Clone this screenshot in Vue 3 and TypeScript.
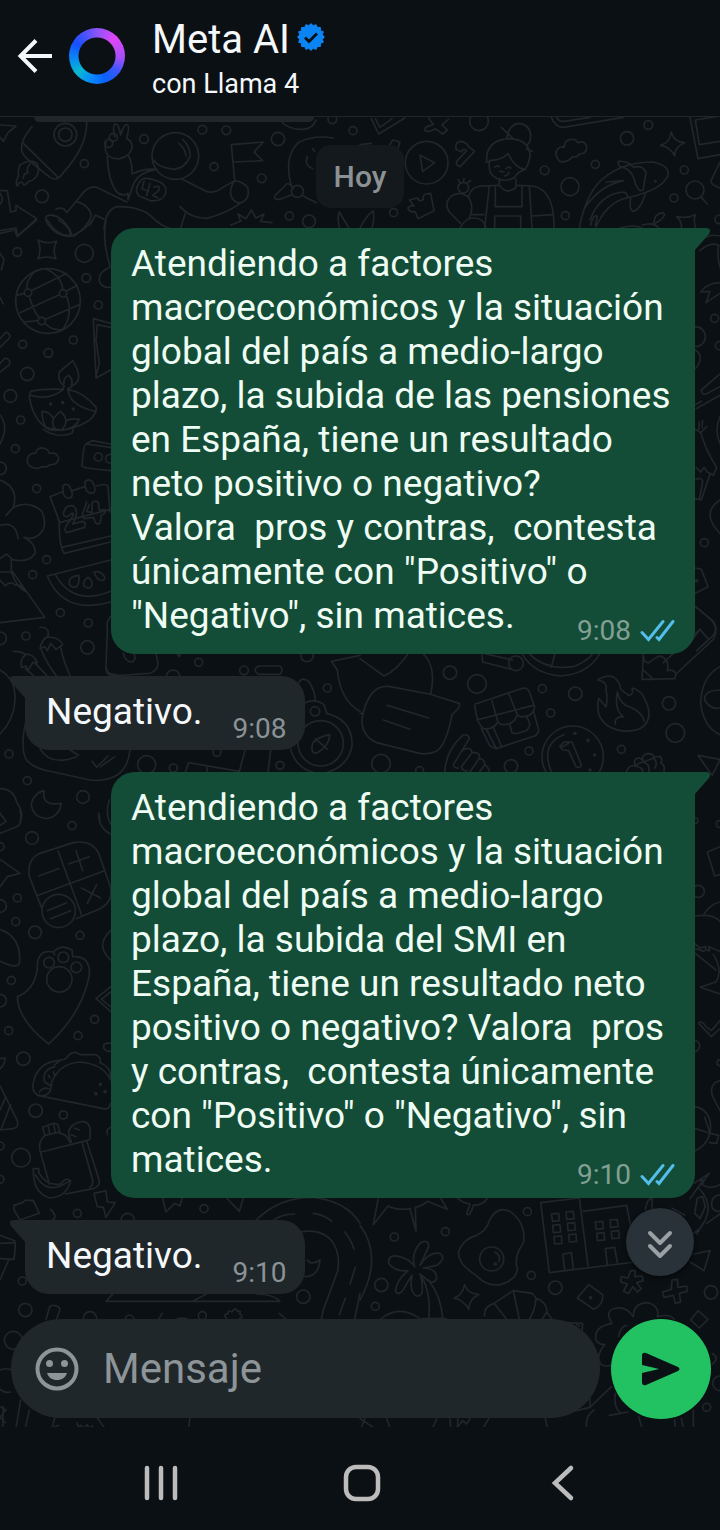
<script setup lang="ts">
import { ref } from 'vue'

interface Message {
  id: number
  side: 'in' | 'out'
  text: string
  time: string
}

interface Doodle {
  x: number
  y: number
  circles: number[][]
  paths: string[]
}

const draft = ref('')

const messages: Message[] = [
  {
    id: 1,
    side: 'out',
    text: 'Atendiendo a factores macroeconómicos y la situación global del país a medio-largo plazo, la subida de las pensiones en España, tiene un resultado neto positivo o negativo?\nValora  pros y contras,  contesta únicamente con "Positivo" o "Negativo", sin matices.',
    time: '9:08',
  },
  { id: 2, side: 'in', text: 'Negativo.', time: '9:08' },
  {
    id: 3,
    side: 'out',
    text: 'Atendiendo a factores macroeconómicos y la situación global del país a medio-largo plazo, la subida del SMI en España, tiene un resultado neto positivo o negativo? Valora  pros y contras,  contesta únicamente con "Positivo" o "Negativo", sin matices.',
    time: '9:10',
  },
  { id: 4, side: 'in', text: 'Negativo.', time: '9:10' },
]

// Scalloped outline of the verified badge
const badgePoints = Array.from({ length: 32 }, (_, i) => {
  const r = i % 2 ? 11 : 13
  const a = (i * Math.PI) / 16
  return `${(14 + r * Math.sin(a)).toFixed(2)},${(14 - r * Math.cos(a)).toFixed(2)}`
}).join(' ')

// Line drawings of the wallpaper, each group drawn at a third of its units
const doodles: Doodle[] = [
  {
    x: 0,
    y: 0,
    circles: [
      [196, 404, 34], [196, 404, 20], [253, 491, 12], [126, 589, 19], [432, 417, 13], [607, 389, 13],
      [679, 391, 13], [642, 500, 12], [834, 417, 20], [785, 535, 13], [868, 648, 12], [927, 664, 19],
      [997, 358, 13], [1059, 392, 12], [892, 574, 18], [526, 468, 70], [326, 430, 12], [340, 412, 12],
    ],
    paths: [
      'M96 380 Q58 425 66 455 Q70 468 100 492 L150 532 Q172 546 188 520 Q262 440 260 366 M70 430 L172 530',
      'M60 495 Q52 515 56 528 Q44 545 52 558 Q60 540 68 550 Q72 562 84 545 Q112 540 116 510 Q116 488 98 484 Q80 482 60 495 M90 492 Q78 505 84 518 Q70 520 70 535',
      'M0 375 L48 378 L24 398 L10 424 L0 412',
      'M344 410 Q336 376 346 372 Q356 370 362 405 Q372 370 382 374 Q390 378 380 415 Q398 425 396 445 Q388 470 360 476 Q330 478 320 460 Q312 445 318 425',
      'M322 470 Q324 540 350 575 Q366 592 384 580 L384 600 L402 548 Q420 515 470 508 M386 468 Q398 490 396 522 Q430 505 470 508',
      'M462 480 Q470 500 520 508 Q555 506 570 470 Q572 440 548 418 M536 430 Q556 445 558 468',
      'M545 536 L615 572 Q640 585 672 560 L704 542 M540 620 Q570 655 620 655 Q680 640 720 610 M704 542 Q690 560 692 585 Q702 612 724 608 Q750 598 744 565 Q730 545 704 542',
      'M704 542 L694 434 L790 426 L762 456 L788 482 L700 486',
      'M424 540 Q436 528 480 546 Q504 560 496 582 Q484 606 452 602 L418 588 Q398 570 424 540 M432 544 L426 566 L446 574 M450 550 L440 586 M462 562 Q482 552 476 572 L458 586 L474 594',
      'M380 606 L290 562 Q265 555 240 590 L200 638 M228 604 Q270 616 274 648 Q260 685 222 708 Q176 716 146 676 Q128 650 146 646 Q180 640 210 690 Q220 712 208 704 M168 628 Q190 618 200 638 M270 675 L286 645 L312 658',
      'M312 690 Q316 630 350 620 Q430 618 465 660 Q500 690 540 690 L556 640',
      'M0 572 L22 572 L32 636 L48 632 L48 616 L110 656 L52 710 L44 690 L0 700 M0 580 Q14 600 0 612',
      'M692 675 L722 664 L714 642 L738 656 L754 630 L768 654 L792 642 L782 664 L816 668',
      'M874 558 Q850 470 895 428 Q940 404 1000 414 M906 586 Q930 600 950 608 M880 566 Q868 548 860 552 L824 588 Q820 600 840 598 L876 584 M922 470 Q912 496 938 506',
      'M938 446 L944 454 M1020 690 Q1010 650 1018 636 L1050 690 M845 366 Q870 390 910 388 Q940 385 948 360',
    ],
  },
  {
    x: 360,
    y: 110,
    circles: [
      [200, 158, 64], [357, 34, 28], [554, 181, 13], [630, 230, 27], [616, 317, 12], [801, 85, 20],
      [865, 45, 13], [706, 163, 12], [973, 180, 12], [942, 264, 12], [1005, 240, 27], [101, 308, 12],
      [310, 233, 16], [1078, 328, 13], [886, 214, 2],
    ],
    paths: [
      'M180 136 L224 158 L188 184 Z M34 26 L56 72 L134 24 M46 26 L60 52 L96 26',
      'M206 24 L220 44 Q192 50 194 60 Q200 70 226 56 L248 72 L262 60 L246 44 L266 28 M0 104 L34 100 M88 106 L98 90 L120 96 L114 114',
      'M288 118 Q284 94 306 94 Q320 98 326 110 L344 124 L300 170 Q286 166 290 154 L320 122 Q310 112 304 126 Z',
      'M380 156 Q376 92 444 86 Q502 86 510 130 Q510 156 496 178 Q474 184 462 204 Q420 222 394 192 Q386 180 388 152 Q430 150 444 130 Q466 176 494 178 M378 156 L390 156 M440 86 Q446 44 476 40 Q508 42 512 74 Q512 98 502 104 M424 52 L462 88 M500 116 L516 124',
      'M404 172 Q410 164 418 170 M438 176 Q444 168 452 174 M420 184 L432 186 M434 198 Q446 196 446 186 M418 206 L418 226 Q440 256 468 232 L468 208',
      'M326 260 Q330 234 360 228 L416 226 M470 226 L520 228 Q584 242 582 354 M388 228 L374 354 M406 230 L406 290 L486 290 L486 230 M508 228 L516 354 M404 354 L404 318 L482 318 L482 354 M516 318 L580 314 M336 314 L372 314',
      'M326 262 Q302 240 274 258 Q250 280 268 306 L302 340 M326 262 Q344 290 328 324 M300 218 L294 208 M310 216 L312 206 M322 218 L332 212 M300 354 Q316 322 344 324 Q370 324 378 354',
      'M148 270 L172 264 Q180 278 190 268 Q186 254 200 252 L212 250 L222 302 L174 326 L166 306 Q146 306 144 294 Q150 284 162 288 Z',
      'M600 154 Q580 136 592 118 Q602 108 612 112 Q614 88 634 88 Q646 86 654 98 Q676 90 680 112 Q680 132 658 132 Q650 144 638 140 Q620 160 600 154',
      'M934 66 Q940 96 974 98 Q944 110 944 138 Q932 112 902 106 Q930 98 934 66 M574 22 Q586 52 610 52 L790 22 M590 22 Q598 36 612 34 L690 22',
      'M990 22 L1014 146 L1080 134 M1006 30 L1018 104 L1080 94 M1006 30 L1080 18 M1080 156 L1052 214 Q1056 226 1080 234 M1022 260 L1042 282',
      'M658 354 Q680 236 742 196 Q796 156 880 156 Q930 168 924 196 Q908 240 800 264 Q742 276 708 350 M776 154 Q806 152 820 172 Q852 164 858 190 Q854 208 850 238 Q838 250 826 222 Q818 176 780 170 Q772 160 776 154 M674 294 Q720 226 790 212 L738 216 M690 330 Q720 250 792 246 Q808 254 800 264 M812 264 Q806 300 820 304 Q840 300 856 252 M692 346 Q700 310 712 320 L706 346',
      'M950 320 Q980 326 1006 314 Q1000 330 1006 352 M950 320 Q966 334 964 352 M846 346 Q880 334 896 354 M880 342 L886 320 Q904 302 914 312 Q912 326 886 340 M780 354 Q820 342 846 354 M0 354 Q18 318 40 302 Q44 330 36 354',
    ],
  },
  {
    x: 0,
    y: 220,
    circles: [
      [52, 96, 13], [253, 100, 27], [259, 174, 13], [295, 255, 12], [68, 373, 12], [145, 399, 13],
      [220, 360, 12], [82, 462, 20], [31, 528, 19], [62, 600, 12], [46, 686, 12], [110, 806, 12],
      [140, 1019, 12], [98, 1064, 12], [181, 1178, 12], [265, 1209, 12], [78, 1248, 12], [262, 1282, 20],
      [144, 243, 97], [84, 218, 11], [189, 220, 11], [125, 303, 11], [295, 711, 12], [330, 716, 13],
      [152, 552, 3], [188, 548, 3], [220, 567, 3], [0, 745, 19], [0, 1255, 19],
    ],
    paths: [
      'M0 32 L48 24 L52 48 L110 0 M142 0 Q170 48 212 48 Q250 36 278 0 M176 0 Q220 28 208 48 M318 0 Q306 60 328 130 L330 142 Q294 156 298 184 Q306 204 332 202',
      'M114 60 Q140 74 170 64 Q156 88 168 116 Q140 106 114 116 Q126 88 114 60',
      'M100 158 Q74 190 82 208 M88 228 Q98 270 118 294 M134 310 Q160 334 188 328 M94 212 L200 160 M60 278 L178 224 M140 148 Q186 170 188 210 M200 230 Q220 280 190 326 M198 214 L232 196 M136 298 L238 254 M50 226 L74 220 M72 306 L114 302 M124 148 Q110 150 100 158',
      'M332 310 L280 296 L288 474 L332 450 M332 322 L292 314 L288 360 L298 430 L288 470',
      'M0 356 L18 336 Q34 344 28 354 L0 382 M0 430 L16 414 Q34 420 28 434 L0 456 M0 585 Q28 620 0 672 M0 100 L12 118 L4 150 M0 232 L10 252',
      'M92 514 Q130 506 186 508 Q196 498 190 496 Q172 480 178 456 L218 422 Q248 470 228 490 Q208 502 208 510 Q250 516 288 562 Q292 580 266 602 Q210 636 148 630 Q98 600 88 530 Z M92 526 Q150 542 190 508 M204 504 Q204 556 286 574 M192 490 Q190 474 206 466 Q222 482 214 494 M126 574 Q150 574 160 596 Q168 584 182 574 Q198 590 198 602 Q216 594 238 598 Q228 622 198 628 Q160 630 138 622 Q126 604 126 574 M160 596 Q154 616 166 626 M198 602 Q198 616 188 626 M130 628 Q170 656 216 640 L220 628',
      'M96 742 Q76 732 84 710 Q92 698 106 700 Q112 682 130 684 Q146 688 148 700 Q174 696 176 716 Q172 736 150 734 Q140 744 126 740 Q112 750 96 742',
      'M332 672 L276 662 L258 672 Q250 676 246 738 Q250 746 332 752 M258 672 L332 682',
      'M0 780 Q58 802 40 862 L18 886 M40 862 Q86 840 126 874 Q148 928 108 950 Q90 960 72 952 Q112 974 104 1002 Q84 1030 36 1018 L20 1002 L0 1016 M0 916 Q48 902 54 956 M34 1018 L34 1050 L134 1192 L0 1208 M0 1056 L34 1056 Q50 1104 80 1116 Q60 1090 48 1096 Q28 1080 16 1098 L0 1080',
      'M186 816 L150 830 L178 904 Q176 974 192 1000 L332 966 M178 908 L332 868 M186 982 L332 948 M218 812 L254 800 M290 798 Q320 788 324 800 L330 876 M188 800 Q194 788 206 796 Q222 820 214 832 Q198 840 190 822 Z M254 786 Q266 774 276 784 Q290 804 282 818 Q266 824 258 808 Z',
      'M190 882 Q196 852 220 858 Q240 876 218 912 L246 904 Q260 904 254 922 L200 938 Q188 930 204 910 L220 886 Q222 872 206 888 Q194 894 190 882 M268 854 L260 874 L276 878 L276 848 Q290 838 296 850 L298 872 L314 868 Q320 880 304 886 L300 910 Q284 918 282 892 L252 896 Q244 884 250 876 L260 846',
      'M332 1020 L142 1068 Q190 1186 332 1146 M166 1064 Q220 1160 332 1114 M236 1066 Q204 1070 208 1092 Q218 1108 232 1098 Q240 1080 236 1066 M264 1072 Q246 1084 252 1098 Q268 1112 276 1096 Q278 1080 264 1072 M282 1056 Q300 1050 314 1070 Q316 1084 300 1080 Q288 1076 282 1056',
      'M120 1222 Q150 1220 144 1250 Q126 1256 120 1286 L134 1280 L142 1292 L152 1270 L168 1288 L188 1274 Q176 1250 146 1252 M40 1294 Q70 1294 76 1306 Q60 1316 64 1342 L78 1338 L84 1352 L98 1328 L112 1328 Q102 1302 76 1302 M124 1290 Q140 1330 168 1366 M182 1282 Q192 1330 210 1366 M106 1330 L140 1366 M76 1346 L100 1366 M332 1190 Q318 1200 322 1230 L318 1340 Q320 1366 350 1364',
    ],
  },
  {
    x: 0,
    y: 640,
    circles: [
      [596, 67, 12], [732, 91, 13], [519, 110, 20], [982, 144, 12], [962, 310, 68], [945, 214, 14],
      [27, 342, 12], [82, 422, 12], [440, 374, 27], [520, 384, 12], [651, 337, 12], [840, 376, 12],
      [249, 471, 19], [921, 46, 19],
    ],
    paths: [
      'M330 105 Q316 100 318 80 M330 108 L450 100 Q474 92 474 70 L468 40 M370 40 Q376 66 396 66 Q410 58 402 42 M776 78 L840 78 Q852 90 840 103 L776 103 Q754 90 776 78',
      'M894 132 Q904 108 926 124 Q946 154 946 184 M912 190 Q910 160 894 132 M912 190 Q946 174 972 194 L980 220 Q1060 240 1056 320 Q1040 390 960 402 Q884 390 870 320 M990 284 Q986 320 950 340 Q930 340 938 310 Q954 290 990 284 M946 296 L982 328 M0 90 Q52 120 44 190 Q40 240 0 282',
      'M1080 46 L994 64 L1012 90 Q1020 180 1080 214 M530 40 L538 50 L542 40',
      'M76 250 Q60 330 80 360 Q100 386 160 396 L270 420 Q380 430 390 330 M120 326 Q150 380 230 350 M276 364 L290 382 L324 348 M302 380 L344 350 M210 330 L236 346 M556 396 L566 368 L718 394 L736 328 M620 378 L622 396 M812 330 L804 396',
      'M132 452 Q124 500 184 490 Q178 530 140 536 Q96 532 94 490 Q104 458 132 452 M0 446 Q40 446 50 486 Q74 524 60 540 M296 520 L300 540',
    ],
  },
  {
    x: 360,
    y: 600,
    circles: [
      [270, 218, 20], [351, 252, 28], [547, 266, 12], [572, 339, 12], [646, 281, 20], [927, 310, 20],
      [946, 399, 28], [507, 453, 12], [453, 499, 20], [784, 448, 12], [63, 491, 28], [179, 512, 12],
      [638, 470, 92], [645, 400, 3], [684, 421, 3], [704, 465, 3], [690, 510, 3], [468, 190, 22],
    ],
    paths: [
      'M0 176 L72 228 Q110 210 142 164 M190 162 Q230 200 212 282 M0 340 L10 340 M12 330 Q34 252 90 260 L208 282 L298 310 Q304 320 276 344 Q260 430 232 452 Q200 468 170 458 L50 428 Q-10 400 12 330 M82 316 L206 354 M70 360 L150 388',
      'M366 164 L368 186 L456 208 M378 162 L458 180 M488 164 Q520 220 600 228 Q680 224 718 164 M510 164 Q560 212 640 200 Q680 184 696 164 M584 164 L574 202',
      'M346 312 L490 264 Q504 264 508 276 L524 320 Q520 350 490 350 Q478 352 472 344 Q462 374 430 374 Q420 374 414 366 Q400 390 370 386 Q350 370 344 316 M394 296 L414 366 M446 280 L472 344 M350 360 L520 316 M364 386 L390 438 L408 446 L524 408 Q540 398 534 382 L520 332 M380 390 L408 444 M400 382 L424 438 M450 376 L456 398 Q464 406 502 390 L510 374 Q506 360 500 352',
      'M714 240 Q740 222 762 232 Q780 244 782 268 L806 286 Q822 286 816 264 Q844 270 856 300 Q884 360 840 386 Q790 404 744 378 Q704 350 716 296 L738 320 Q744 300 738 270 Q744 246 714 240 M766 372 Q762 350 790 350 Q762 330 772 276 Q780 314 812 322 Q850 340 852 364',
      'M574 516 Q540 430 612 404 M626 430 Q600 446 600 440 Q610 424 622 426 L636 426 L664 494 Q662 506 648 500 L626 452 L610 450 Q602 446 600 438',
      'M850 164 L846 238 L944 236 L948 222 Q940 206 922 212 Q930 180 902 168 Q888 170 868 188 Q850 190 850 164 M850 210 L880 238 M948 222 L1060 118 Q1080 86 1050 56 L1010 22 M910 188 L1020 88 L1046 118 M1020 88 L990 130',
      'M1080 200 Q1024 230 1022 310 Q1030 380 1080 404 M1080 270 Q1032 270 1034 300 Q1050 330 1080 324 M1014 466 L1080 478 M1014 466 L1056 526 L1080 480',
      'M254 516 Q258 450 308 406 Q326 400 328 416 L306 452 Q332 436 336 458 Q362 456 358 474 Q376 480 374 494 Q386 500 388 516 M306 452 L280 494 Q282 506 296 504 M336 458 L304 500 Q308 514 322 512 M358 474 L330 516 M374 494 L358 516',
      'M800 514 Q806 494 826 498 Q818 474 838 474 Q850 478 850 486 Q842 464 864 460 Q886 464 880 474 Q904 462 906 482 L902 488 Q916 496 912 514 M826 498 Q840 486 850 486 L882 474 M850 486 Q872 494 866 516 M880 474 Q896 488 884 504 M826 498 Q852 504 848 516',
    ],
  },
  {
    x: 0,
    y: 800,
    circles: [
      [216, 77, 12], [96, 114, 19], [52, 294, 12], [47, 365, 12], [105, 397, 19], [240, 406, 12],
      [34, 541, 12], [26, 692, 12], [234, 707, 12], [284, 658, 12], [70, 776, 20], [107, 932, 20],
      [190, 945, 12], [63, 1073, 28], [232, 1240, 12], [147, 488, 16], [190, 472, 16], [229, 502, 16],
      [178, 538, 38], [176, 333, 50], [0, 318, 19], [0, 602, 19], [0, 1038, 12], [0, 1138, 12],
      [0, 140, 12], [301, 853, 3], [288, 881, 3], [315, 875, 3],
    ],
    paths: [
      'M0 40 L18 64 L0 76 M60 30 Q70 70 50 80 L0 100 M296 40 Q296 86 332 102 M328 0 Q314 40 332 72 M0 178 L60 220 L22 230 L0 260',
      'M88 230 Q80 178 120 160 L220 128 Q276 118 296 160 L324 240 Q350 300 300 326 L228 356 M88 230 L126 326 M174 152 L246 348 M114 286 L314 212 M116 228 L176 206 M206 192 L268 170 M228 152 L248 212 M244 264 L302 294 M290 254 L262 310 M142 332 L200 308 M152 356 L212 332',
      'M0 388 Q66 412 58 490 Q52 508 0 484 M332 392 Q284 436 332 480 M332 560 L288 596 L332 634 M332 576 L304 598 L332 620',
      'M52 590 Q104 570 112 506 Q110 446 160 456 Q184 430 216 450 L218 470 Q272 466 268 526 Q246 640 146 732 Q54 660 52 590 M160 456 L164 464',
      'M98 860 Q106 796 160 784 L182 780 Q198 780 206 766 Q220 750 240 764 L288 764 Q306 774 300 788 Q334 800 332 834 M98 860 Q100 886 126 888 Q156 884 154 850 Q176 790 240 786 Q310 792 332 840 M112 886 L310 926 Q328 930 332 910 M164 800 Q124 810 134 846 L150 856 M182 780 L164 794 M118 876 Q130 860 146 866 M146 826 L150 834 M160 816 L164 826 M0 776 L16 774 Q12 800 0 806 M332 730 Q306 726 312 746 Q320 756 332 754',
      'M0 858 L52 962 Q58 984 38 986 L0 990 M32 914 L4 986 M18 890 L0 930',
      'M128 982 L160 970 Q172 970 174 976 L180 996 L134 1006 Z M144 976 L150 1002 M160 970 L166 998 M136 1006 Q114 1022 120 1052 L148 1152 M124 1056 L260 1022 Q272 1020 270 1010 Q276 970 250 964 Q206 970 206 1002 L214 1026 M180 1000 Q202 1002 210 1028 M222 984 L238 990 M214 1004 L228 1010 M260 1022 L298 1142 Q300 1160 280 1166 L196 1182 M246 1026 L278 1140 Q280 1158 268 1162 M100 1106 Q98 1180 150 1194 Q200 1192 212 1142 Q196 1130 182 1152 Q140 1160 116 1118 L116 1106 Z M106 1124 Q140 1190 206 1144',
      'M282 1180 L318 1172 L322 1206 L346 1208 L318 1252 L310 1222 L292 1220 Z M42 1216 L68 1208 L76 1200 L100 1202 L118 1240 L60 1260 L42 1230 Z M152 1228 Q174 1250 158 1260 M332 982 Q316 990 322 1004',
    ],
  },
  {
    x: 0,
    y: 1180,
    circles: [
      [67, 303, 12], [76, 390, 20], [40, 481, 27], [910, 350, 20], [607, 407, 12], [612, 86, 12],
      [383, 120, 20], [270, 415, 20], [389, 418, 13],
    ],
    paths: [
      'M488 54 L498 96 L524 70 L540 78 L546 54 M680 54 L718 94 L730 54',
      'M768 120 Q840 50 940 52 Q1040 64 1080 130 M900 156 Q970 144 1000 190 Q1020 220 1014 270 L970 390 L964 418 M824 118 Q850 102 884 102 M940 100 Q972 104 996 124 M1034 156 Q1054 180 1062 208 M1066 262 L1050 312 M1036 354 L1018 404 M1080 340 L1064 418 M922 240 Q934 258 960 240 Q956 290 914 290',
      'M340 340 L318 364 L840 364 Q820 342 770 342 M580 362 L620 342',
      'M138 418 L150 378 Q170 372 180 386 L170 418 M476 418 L486 400 M680 416 Q668 400 684 402 Q682 388 696 396 Q706 378 712 394 Q726 390 718 402 Q734 408 718 416 M838 400 L858 418 M530 418 Q546 410 562 418',
      'M0 166 L44 182 Q48 194 42 238 L0 236 M0 190 L44 188 M26 240 L0 300 M0 570 Q30 560 40 576 M0 628 Q14 640 32 636 M0 680 L18 690 L0 712 L16 728 M62 660 L48 744 M88 690 L76 744 M10 680 L8 744',
      'M168 700 L156 744 L176 736 M232 728 Q230 744 244 736 Q252 750 262 734 Q266 748 278 738 M290 712 L314 744 M566 744 L570 712',
    ],
  },
  {
    x: 360,
    y: 1150,
    circles: [
      [502, 185, 12], [256, 245, 12], [103, 261, 12], [64, 405, 20], [46, 469, 12], [514, 376, 12],
      [586, 413, 20], [1053, 427, 20], [395, 327, 36], [692, 443, 3], [1040, 772, 12], [1080, 700, 22],
      [406, 342, 3],
    ],
    paths: [
      'M54 148 L40 224 L84 168 Q110 182 150 176 L168 244 L166 172 Q190 166 202 154 L262 178 L242 144 M294 146 Q310 160 330 162 L320 192 Q330 202 340 166 Q370 166 382 144 M0 226 Q70 320 0 450',
      'M388 212 Q410 166 450 184 Q500 220 490 280 Q460 320 472 356 Q470 390 420 404 Q380 410 348 376 Q290 340 296 304 Q310 266 350 256 Q380 240 388 212 M404 306 Q424 316 416 334',
      'M164 350 Q152 310 182 278 Q206 266 206 290 L180 346 Q206 304 240 310 Q260 324 230 346 L190 354 Q230 354 230 386 Q222 404 204 392 L180 372 Q190 400 186 430 Q176 444 164 434 Q148 420 156 376 Q146 390 132 416 Q116 440 106 424 Q110 390 144 362 Q104 366 86 340 Q84 310 120 320 Q152 330 164 350 M186 382 Q214 430 206 508 M206 390 Q244 440 248 506 M186 506 L258 506 M60 508 Q120 460 182 508',
      'M314 404 Q320 430 356 434 Q328 446 326 478 Q312 450 282 444 Q308 436 314 404',
      'M374 498 Q370 470 402 460 L460 422 L516 430 L528 444 Q564 460 560 486 L576 508 M402 460 L440 508 M460 422 L478 508 M528 444 Q526 480 508 508 M560 486 L546 508 M620 518 L668 520 L666 548 M650 524 L658 528',
      'M542 158 L658 144 L684 348 M542 158 L568 368 L826 336 M670 184 L800 166 L812 230',
      'M574 192 L596 190 L598 212 L578 214 Z M618 186 L640 184 L642 206 L620 208 Z M578 226 L600 224 L602 246 L580 248 Z M622 220 L644 218 L646 240 L624 242 Z M582 260 L604 258 L606 280 L584 282 Z M626 254 L648 252 L650 274 L628 276 Z M706 216 L728 214 L730 236 L708 238 Z M750 210 L772 208 L774 230 L752 232 Z M710 250 L732 248 L734 270 L712 272 Z M754 244 L776 242 L778 264 L756 266 Z M614 360 L608 312 L634 308 L640 356 M742 344 L736 296 L764 292 L772 338',
      'M686 404 L728 434 Q732 462 702 478 L652 444 Z M1014 482 L1044 508 L1018 534 L992 510 Z',
      'M812 362 L826 362 L824 380 L846 378 L850 392 L830 398 L844 416 L832 426 L818 410 L806 430 L790 424 L802 402 L782 396 L784 380 L804 384 Z',
      'M936 390 L952 388 L954 412 L980 408 L982 424 L958 430 L962 456 L946 460 L940 436 L912 442 L908 426 L934 418 Z',
      'M756 520 Q730 480 770 474 Q800 470 820 500 Q820 458 866 458 Q900 470 892 500 Q930 490 942 508 M756 520 Q700 530 708 570 Q716 584 734 584 Q704 620 724 644 Q740 652 760 644 M776 560 Q780 530 800 526',
      'M990 146 L1030 90 Q1010 90 1002 100 L1048 70 Q1032 90 1026 104 Q1050 120 1080 104 M1016 114 Q1060 160 1036 210 L1010 252 M1012 144 L1028 140 L1036 170 L1020 206 L1004 190 Z M1080 134 Q1050 140 1056 170 Q1060 184 1080 184 M1080 192 L1040 220 M1000 250 L1016 238 M856 178 Q862 146 876 144 L876 178 M936 174 L974 196 M1002 312 L1050 302 L1032 362 L990 336',
      'M690 746 L690 772 L640 784 M690 772 L754 710 M748 796 L804 786 M766 730 Q760 770 780 788 M680 832 Q674 800 702 780 M836 800 L846 834 M944 810 L946 834 M964 806 L970 834 M1000 780 L1000 832 M1056 610 Q1080 624 1058 642',
      'M0 806 L40 832 M14 806 L4 834 M80 806 L90 834 M230 806 L218 834 M270 806 L272 834 M294 806 L292 832 L308 812 L320 822 L330 806 M386 806 L370 834 M556 806 L562 834',
    ],
  },
  {
    x: 600,
    y: 230,
    circles: [[344, 265, 12], [313, 938, 12], [286, 320, 30], [358, 347, 12], [290, 1052, 3]],
    paths: [
      'M304 30 Q330 10 360 18 M300 62 Q330 34 356 46 Q350 80 360 112 M302 186 Q320 160 360 158 M302 186 L330 184 L318 218 L360 190 M286 360 Q316 380 286 416 M360 432 L304 480 Q304 494 318 492 L360 470 M360 496 L288 536 M286 524 L304 514',
      'M286 598 L296 604 Q302 612 304 606 L320 590 M298 576 L296 598 M306 594 L308 572 M302 606 Q316 660 350 712 L340 736 L322 726 L312 712 L302 726 L288 712 M330 732 L304 810 L286 806 M288 748 Q308 740 308 756 L298 808 M360 560 Q342 600 360 640 M360 810 Q300 850 360 910 M286 1014 L304 1018 L324 1070 L286 1090 M286 1130 L340 1174 Q354 1196 340 1216 L290 1262',
    ],
  },
  {
    x: 600,
    y: 750,
    circles: [[295, 424, 18], [286, 212, 8], [360, 222, 11], [282, 888, 17], [360, 938, 9]],
    paths: [
      'M360 290 L322 306 L344 378 L360 374 M286 498 Q340 490 360 514 M310 496 Q330 462 360 456 M286 582 L300 594 L318 590 L316 600 L328 602 L326 590 L360 604 M286 596 L312 604 M286 610 L348 660 M340 614 Q370 660 348 696 L300 712 L360 732',
      'M296 820 Q306 810 318 830 L334 842 L360 812 M296 820 L334 860 L360 836 M360 992 Q326 1000 338 1040 L360 1082 M286 1070 Q330 1080 332 1130 Q330 1180 286 1202 M286 1136 L330 1150 L314 1102 M332 1150 L356 1156 L350 1180 L328 1178',
    ],
  },
]
</script>

<template>
  <div class="app">
    <header class="header">
      <button class="icon-btn back" type="button" aria-label="Atrás">
        <svg width="36" height="36" viewBox="0 0 36 36" fill="none" stroke="currentColor" stroke-width="4">
          <path d="M36 18H5M20 2.500 4.500 18 20 33.500" />
        </svg>
      </button>
      <div class="ring"></div>
      <div class="identity">
        <h1 class="name">
          Meta AI
          <svg class="badge" width="28" height="28" viewBox="0 0 28 28" aria-label="Verificado">
            <polygon :points="badgePoints" fill="#0b84f3" stroke="#0b84f3" stroke-width="1.500" stroke-linejoin="round" />
            <path d="M8 14.500 12 18.500 20 10.500" fill="none" stroke="#0b1014" stroke-width="2.800" />
          </svg>
        </h1>
        <p class="model">con Llama 4</p>
      </div>
    </header>

    <main class="chat">
      <svg class="wallpaper" viewBox="0 117 720 1310" preserveAspectRatio="xMidYMin slice" aria-hidden="true">
        <g v-for="(d, i) in doodles" :key="i" :transform="`translate(${d.x} ${d.y}) scale(0.33333)`">
          <circle v-for="(c, j) in d.circles" :key="j" :cx="c[0]" :cy="c[1]" :r="c[2]" />
          <path v-for="(p, j) in d.paths" :key="j" :d="p" />
        </g>
      </svg>

      <div class="previous"></div>
      <div class="day">Hoy</div>

      <div class="thread">
        <article v-for="m in messages" :key="m.id" class="bubble" :class="m.side">
          <svg class="tail" width="15" height="22" viewBox="0 0 15 22" aria-hidden="true">
            <path d="M0 0H11Q17 0 14 6L0 22Z" fill="currentColor" />
          </svg>
          <p class="text">{{ m.text }}</p>
          <footer class="meta">
            <time>{{ m.time }}</time>
            <svg v-if="m.side === 'out'" class="ticks" width="36" height="24" viewBox="0 0 36 24" fill="none" stroke="#53bdeb" stroke-width="3" stroke-linecap="round" aria-label="Leído">
              <path d="M3 13.500 9.500 20.500 24 2.500M18 18.500 20 20.500 34 2.500" />
            </svg>
          </footer>
        </article>
      </div>

      <button class="jump" type="button" aria-label="Ir al final">
        <svg width="28" height="32" viewBox="0 0 28 32" fill="none" stroke="currentColor" stroke-width="4" stroke-linecap="round" stroke-linejoin="round">
          <path d="M4 5 14 15 24 5M4 18 14 28 24 18" />
        </svg>
      </button>

      <form class="composer" @submit.prevent>
        <div class="field">
          <button class="icon-btn emoji" type="button" aria-label="Emojis">
            <svg width="44" height="44" viewBox="0 0 44 44" fill="currentColor">
              <circle cx="22" cy="22" r="19.500" fill="none" stroke="currentColor" stroke-width="4" />
              <circle cx="14.500" cy="16.500" r="3.500" />
              <circle cx="29.500" cy="16.500" r="3.500" />
              <path d="M12 26H32C30.500 30.500 27 33 22 33S13.500 30.500 12 26Z" />
            </svg>
          </button>
          <input v-model="draft" class="input" type="text" placeholder="Mensaje" aria-label="Mensaje" />
        </div>
        <button class="send" type="submit" aria-label="Enviar">
          <svg width="40" height="34" viewBox="0 0 40 34" fill="currentColor">
            <path d="M1 4Q1 0 5 1L37 15Q40 17 37 19L5 33Q1 34 1 30V21L18 17L1 13Z" />
          </svg>
        </button>
      </form>
    </main>

    <nav class="system">
      <button class="icon-btn key" type="button" aria-label="Recientes">
        <svg width="40" height="40" viewBox="0 0 40 40" fill="none" stroke="currentColor" stroke-width="4.500" stroke-linecap="round">
          <path d="M6 5V35M20 5V35M34 5V35" />
        </svg>
      </button>
      <button class="icon-btn key" type="button" aria-label="Inicio">
        <svg width="40" height="40" viewBox="0 0 40 40" fill="none" stroke="currentColor" stroke-width="4.500">
          <rect x="4" y="4" width="32" height="32" rx="10" />
        </svg>
      </button>
      <button class="icon-btn key" type="button" aria-label="Volver">
        <svg width="40" height="40" viewBox="0 0 40 40" fill="none" stroke="currentColor" stroke-width="4.500" stroke-linecap="round">
          <path d="M28 5 12 20 28 35" />
        </svg>
      </button>
    </nav>
  </div>
</template>

<style>
body {
  margin: 0;
  background: #0b1014;
}
</style>

<style scoped>
.app {
  display: flex;
  flex-direction: column;
  min-height: 100vh;
  background: #0b1014;
  color: #f5f8fa;
  font-family: Roboto, 'Liberation Sans', sans-serif;
}

.icon-btn {
  display: flex;
  flex: none;
  align-items: center;
  justify-content: center;
  padding: 0;
  border: 0;
  background: none;
  color: inherit;
}

.header {
  display: flex;
  align-items: center;
  box-sizing: border-box;
  height: 117px;
  padding: 0 16px 4px;
  border-bottom: 1px solid #1f2528;
}

.ring {
  flex: none;
  box-sizing: border-box;
  width: 56px;
  height: 56px;
  margin: 0 27px 0 17px;
  border-radius: 50%;
  background:
    radial-gradient(circle, #0b1014 18px, transparent 19px),
    conic-gradient(#8a55f8, #e045f6 45deg, #a34ff8 95deg, #3d56ff 125deg, #0a62ff 160deg, #0a84ff 190deg, #08b8d0 230deg, #0a86f5 265deg, #1450ff 300deg, #5552fa 335deg, #8a55f8);
}

.identity {
  padding-top: 8px;
}

.name {
  display: flex;
  align-items: center;
  gap: 7px;
  margin: 0;
  font-size: 40px;
  font-weight: 400;
  line-height: 48px;
}

.badge {
  margin-bottom: 6px;
}

.model {
  margin: 0;
  font-size: 27px;
  line-height: 40px;
}

.chat {
  position: relative;
  display: flex;
  flex: 1;
  flex-direction: column;
}

.wallpaper {
  position: absolute;
  inset: 0;
  width: 100%;
  height: 100%;
  fill: none;
  stroke: #20262a;
  stroke-width: 5;
  stroke-linecap: round;
  stroke-linejoin: round;
}

.previous {
  position: relative;
  width: 280px;
  height: 5px;
  margin-left: 34px;
  border-radius: 0 0 16px 16px;
  background: #20272b;
}

.day {
  position: relative;
  align-self: center;
  margin: 23px 0 20px;
  padding: 12px 18px 11px;
  border-radius: 15px;
  background: #14191d;
  color: #8c9294;
  font-size: 30px;
  font-weight: 500;
  line-height: 40px;
}

.thread {
  position: relative;
  display: flex;
  flex-direction: column;
  align-items: flex-start;
  gap: 22px;
  padding: 0 25px;
}

.bubble {
  position: relative;
  box-sizing: border-box;
  max-width: 584px;
  border-radius: 24px;
  font-size: 37px;
  line-height: 44px;
}

.bubble.out {
  display: grid;
  align-self: flex-end;
  padding: 14px 20px 16px;
  border-top-right-radius: 0;
  background: #144d37;
  color: #eefcf4;
}

.bubble.in {
  display: flex;
  gap: 30px;
  padding: 14px 18px 16px 21px;
  border-top-left-radius: 0;
  background: #20272b;
}

.tail {
  position: absolute;
  top: 0;
}

.out .tail {
  left: 100%;
  color: #144d37;
}

.in .tail {
  right: 100%;
  color: #20272b;
  transform: scaleX(-1);
}

.text {
  grid-area: 1 / 1;
  margin: 0;
  white-space: pre-wrap;
}

.meta {
  display: flex;
  grid-area: 1 / 1;
  align-items: center;
  align-self: end;
  justify-self: end;
  gap: 8px;
  margin-bottom: -9px;
  color: #8b9397;
  font-size: 28px;
  line-height: 32px;
}

.in .meta {
  margin-bottom: -11px;
}

.out .meta {
  color: #82a093;
}

.jump {
  position: absolute;
  right: 26px;
  bottom: 151px;
  display: flex;
  align-items: center;
  justify-content: center;
  width: 68px;
  height: 68px;
  padding: 4px 0 0;
  border: 0;
  border-radius: 50%;
  background: #283238;
  box-shadow: 0 2px 4px #05080a;
  color: #9aa1a5;
}

.composer {
  position: relative;
  display: flex;
  align-items: flex-start;
  gap: 11px;
  margin-top: auto;
  padding: 24px 9px 8px 11px;
}

.field {
  display: flex;
  flex: 1;
  align-items: center;
  gap: 24px;
  box-sizing: border-box;
  height: 99px;
  min-width: 0;
  padding: 0 24px;
  border-radius: 50px;
  background: #20272b;
}

.emoji {
  color: #8d9598;
}

.input {
  flex: 1;
  min-width: 0;
  padding: 0;
  border: 0;
  outline: 0;
  background: none;
  color: #f5f8fa;
  font: inherit;
  font-size: 42px;
  line-height: 52px;
}

.input::placeholder {
  color: #8d9598;
  opacity: 1;
}

.send {
  display: flex;
  flex: none;
  align-items: center;
  justify-content: center;
  width: 100px;
  height: 100px;
  padding: 0;
  border: 0;
  border-radius: 50%;
  background: #22c263;
  color: #0b1014;
}

.system {
  display: flex;
  align-items: center;
  justify-content: center;
  gap: 101px;
  height: 103px;
  padding-left: 3px;
  color: #bcbcbc;
}

.key {
  width: 100px;
  height: 80px;
  margin-top: 8px;
}
</style>
